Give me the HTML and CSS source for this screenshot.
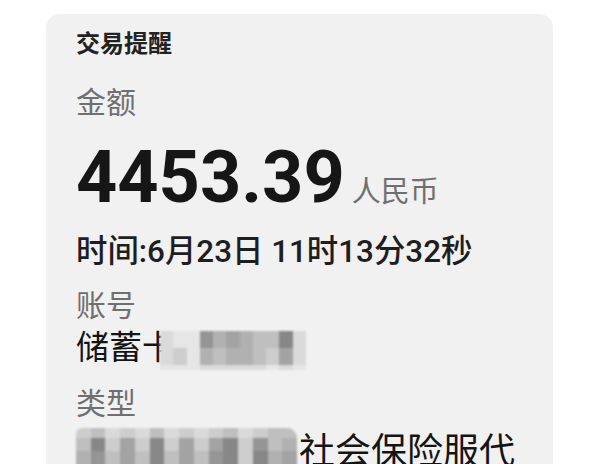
FILE: index.html
```html
<!DOCTYPE html>
<html lang="zh-CN">
<head>
<meta charset="utf-8">
<title>交易提醒</title>
<link rel="stylesheet" href="styles.css">
</head>
<body>
<div class="card">
  <div class="title">交易提醒</div>
  <div class="label label-amount">金额</div>
  <div class="amount"><span class="num">4453.39</span><span class="cur">人民币</span></div>
  <div class="time">时间:6月23日 11时13分32秒</div>
  <div class="label label-account">账号</div>
  <div class="value value-account"><span class="txt">储蓄卡</span><span class="mosaic mosaic-card">
    <i class="s1"></i><i class="s0"></i><i class="s0"></i><i class="s6"></i><i class="s4"></i><i class="s5"></i><i class="s4"></i><i class="s3"></i><i class="s3"></i><i class="s7"></i><i class="s1"></i>
    <i class="s1"></i><i class="s2"></i><i class="s0"></i><i class="s4"></i><i class="s3"></i><i class="s4"></i><i class="s4"></i><i class="s3"></i><i class="s2"></i><i class="s5"></i><i class="s1"></i>
    <i class="s0"></i><i class="s0"></i><i class="s0"></i><i class="s1"></i><i class="s1"></i><i class="s1"></i><i class="s1"></i><i class="s1"></i><i class="s0"></i><i class="s1"></i><i class="s0"></i>
  </span></div>
  <div class="label label-type">类型</div>
  <div class="value value-type"><span class="mosaic mosaic-type">
    <i class="s2"></i><i class="s3"></i><i class="s1"></i><i class="s2"></i><i class="s1"></i><i class="s3"></i><i class="s1"></i><i class="s2"></i><i class="s1"></i><i class="s2"></i><i class="s3"></i><i class="s1"></i><i class="s2"></i><i class="s3"></i><i class="s3"></i>
    <i class="s3"></i><i class="s7"></i><i class="s2"></i><i class="s5"></i><i class="s2"></i><i class="s7"></i><i class="s2"></i><i class="s5"></i><i class="s2"></i><i class="s5"></i><i class="s7"></i><i class="s2"></i><i class="s6"></i><i class="s3"></i><i class="s4"></i>
    <i class="s4"></i><i class="s6"></i><i class="s3"></i><i class="s5"></i><i class="s3"></i><i class="s7"></i><i class="s3"></i><i class="s5"></i><i class="s3"></i><i class="s6"></i><i class="s7"></i><i class="s2"></i><i class="s7"></i><i class="s4"></i><i class="s5"></i>
  </span><span class="txt">社会保险服代</span></div>
</div>
</body>
</html>
```
FILE: styles.css
```css
* {
  box-sizing: border-box;
  margin: 0;
  padding: 0;
}

html, body {
  height: 464px;
  overflow: hidden;
}

body {
  background: #ffffff;
  font-family: Roboto, "Noto Sans CJK SC", sans-serif;
}

.card {
  margin: 14px 0 0 46px;
  width: 507px;
  min-height: 480px;
  background: #f1f1f1;
  border-radius: 14px;
  padding: 10px 30px 0 30px;
}

.title {
  font-size: 24px;
  line-height: 40px;
  font-weight: 700;
  color: #222222;
}

.label {
  font-size: 30px;
  line-height: 40px;
  color: #6f6f6f;
}

.label-amount {
  margin-top: 19px;
}

.amount {
  margin-top: 15px;
  font-size: 72px;
  line-height: 80px;
  height: 80px;
  white-space: nowrap;
}

.num {
  font-weight: 700;
  color: #161616;
}

.cur {
  font-size: 29px;
  line-height: 1;
  color: #6f6f6f;
  margin-left: 7px;
}

.time {
  margin-top: 14px;
  font-size: 31.4px;
  line-height: 40px;
  font-weight: 500;
  color: #1e1e1e;
  white-space: nowrap;
}

.label-account {
  margin-top: 14px;
}

.value {
  display: flex;
  align-items: center;
  color: #141414;
  white-space: nowrap;
}

.value-account {
  margin-top: 2px;
  height: 40px;
  font-size: 33px;
  line-height: 40px;
}

.label-type {
  margin-top: 16px;
}

.value-type {
  margin-top: 6px;
  height: 44px;
  font-size: 36px;
  line-height: 44px;
  align-items: flex-start;
}

.mosaic {
  display: grid;
  filter: blur(1.3px);
  flex: none;
}

.mosaic i {
  display: block;
}

.mosaic-card {
  grid-template-columns: repeat(11, 1fr);
  grid-template-rows: 17px 17px 5px;
  width: 146px;
  margin-left: -15px;
  margin-top: 4px;
}

.mosaic-type {
  grid-template-columns: repeat(15, 1fr);
  grid-template-rows: 10px 13px 17px;
  width: 221px;
  margin-top: -2px;
  margin-right: 2px;
  border-radius: 6px 10px 0 0;
  overflow: hidden;
}

.s0 { background: #e6e6e6; }
.s1 { background: #dadada; }
.s2 { background: #cdcdcd; }
.s3 { background: #bfbfbf; }
.s4 { background: #b1b1b1; }
.s5 { background: #a3a3a3; }
.s6 { background: #959595; }
.s7 { background: #878787; }
```
